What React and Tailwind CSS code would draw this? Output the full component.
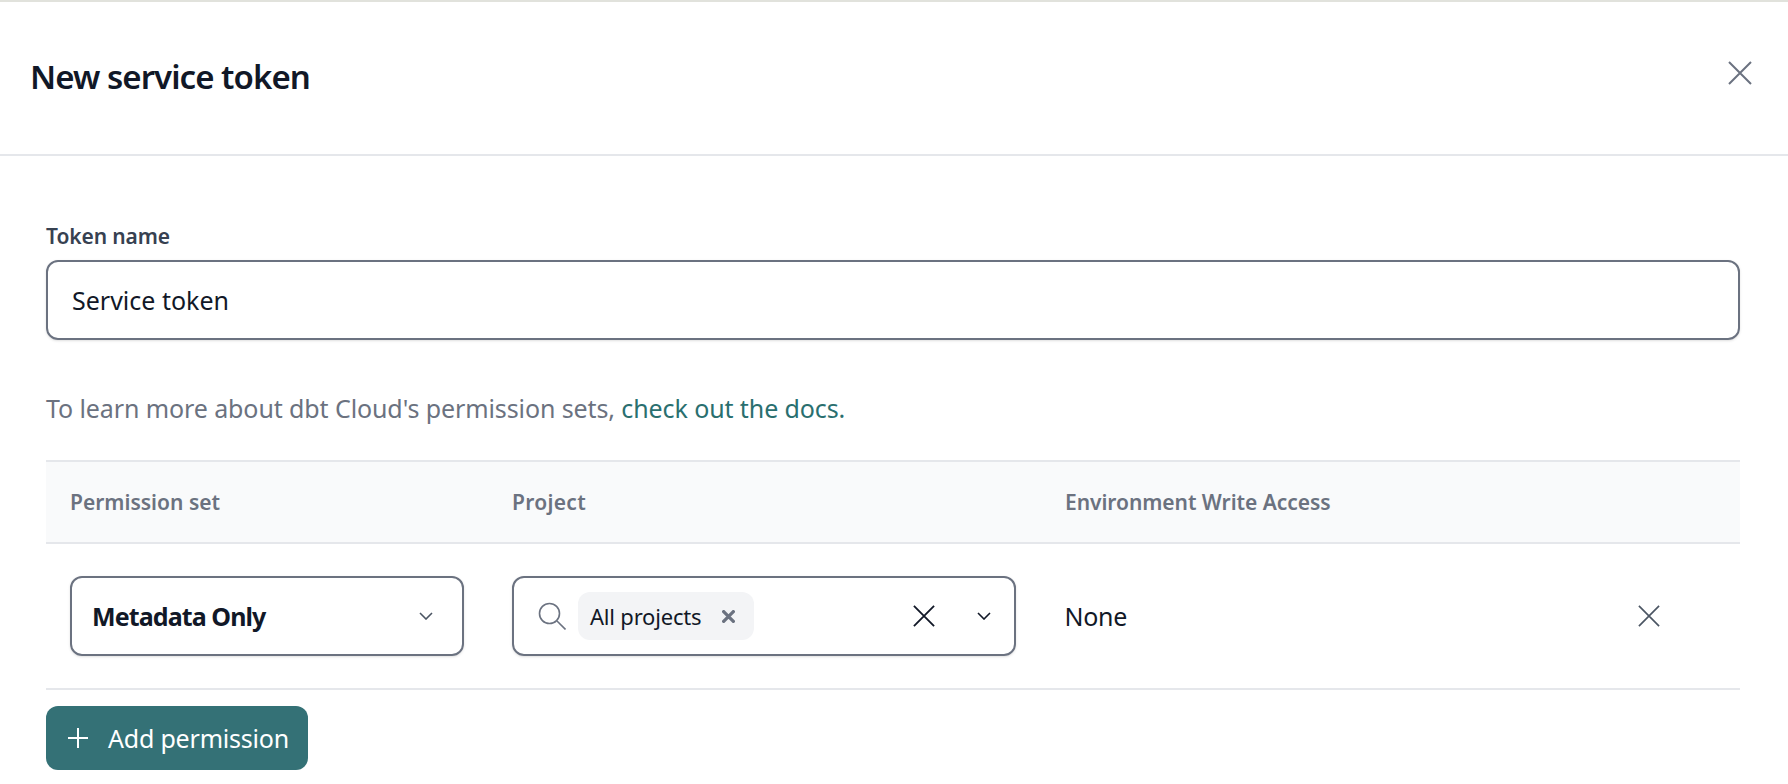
import React from "react";

const font = { fontFamily: '"Noto Sans", "Liberation Sans", sans-serif' };

function CrossIcon({ className, strokeWidth = 2 }) {
  return (
    <svg viewBox="0 0 24 24" fill="none" stroke="currentColor" strokeWidth={strokeWidth} className={className}>
      <path d="M1 1L23 23M23 1L1 23" />
    </svg>
  );
}

function ChevronIcon({ className }) {
  return (
    <svg viewBox="0 0 14 8" fill="none" stroke="currentColor" strokeWidth="1.6" className={className}>
      <path d="M1 1L7 7L13 1" />
    </svg>
  );
}

export default function App() {
  return (
    <div className="min-h-[784px] bg-white" style={font}>
      {/* Header */}
      <header className="h-[156px] flex items-center justify-between border-t-2 border-b-2 border-t-[#e1e2dc] border-b-[#e5e7eb] pl-[30px] pr-[36px]">
        <h1 className="text-[33px] leading-[40px] font-semibold text-[#111827] tracking-[-0.95px] -mt-[2px]">New service token</h1>
        <CrossIcon className="w-[24px] h-[24px] text-[#6b7280] -mt-[10px]" strokeWidth={2} />
      </header>

      <main className="pl-[46px] pr-[48px] pt-[64px]">
        <label className="block text-[21px] leading-[32px] font-semibold text-[#374151] tracking-[-0.1px] mb-[8px]">Token name</label>
        <div className="h-[80px] border-2 border-[#6b7280] rounded-[12px] shadow-sm flex items-center pl-[24px] pt-[2px] text-[25px] text-[#111827]">
          Service token
        </div>

        <p className="mt-[50px] text-[25px] leading-[36px] text-[#6b7280] tracking-[-0.1px]">
          To learn more about dbt Cloud's permission sets, <span className="text-[#2a6f6f]">check out the docs.</span>
        </p>

        {/* Permissions table */}
        <div className="mt-[34px] border-t-2 border-[#e5e7eb]">
          <div className="h-[82px] bg-[#f9fafb] border-b-2 border-[#e5e7eb] grid grid-cols-[466px_553px_1fr] items-center text-[21px] font-semibold text-[#6b7280]">
            <div className="pl-[24px] pt-[1px]">Permission set</div>
            <div className="pt-[1px] tracking-[0.3px]">Project</div>
            <div className="pt-[1px] tracking-[-0.05px]">Environment Write Access</div>
          </div>

          <div className="h-[146px] border-b-2 border-[#e5e7eb] grid grid-cols-[466px_553px_1fr] items-center">
            <div className="pl-[24px]">
              <div className="w-[394px] h-[80px] border-2 border-[#6b7280] rounded-[12px] shadow-sm flex items-center justify-between pl-[20px] pr-[29px]">
                <span className="text-[25px] font-bold text-[#111827] tracking-[-0.9px] pt-[2px]">Metadata Only</span>
                <ChevronIcon className="w-[14px] h-[8px] text-[#4b5563]" />
              </div>
            </div>

            <div>
              <div className="w-[504px] h-[80px] border-2 border-[#6b7280] rounded-[12px] shadow-sm flex items-center pl-[24px] pr-[23px]">
                <svg viewBox="0 0 28 28" fill="none" stroke="#6b7280" strokeWidth="1.6" className="w-[28px] h-[28px] shrink-0">
                  <circle cx="11.5" cy="11.5" r="10" />
                  <path d="M19 19L27.5 27.5" />
                </svg>
                <div className="ml-[12px] h-[48px] w-[176px] bg-[#f3f4f6] rounded-[12px] flex items-center pl-[12px] text-[22px] text-[#111827] tracking-[-0.2px]">
                  All projects
                  <CrossIcon className="w-[13px] h-[13px] text-[#6b7280] ml-auto mr-[19px]" strokeWidth={6} />
                </div>
                <CrossIcon className="w-[22px] h-[22px] text-[#111827] ml-auto" strokeWidth={2} />
                <ChevronIcon className="w-[14px] h-[8px] text-[#111827] ml-[42px]" />
              </div>
            </div>

            <div className="flex items-center justify-between pr-[80px]">
              <span className="text-[25px] text-[#111827] tracking-[-0.3px] pt-[2px] -ml-[0.5px]">None</span>
              <CrossIcon className="w-[22px] h-[22px] text-[#4b5563]" strokeWidth={1.8} />
            </div>
          </div>
        </div>

        <button className="mt-[16px] h-[64px] w-[262px] bg-[#347176] rounded-[12px] flex items-center pl-[22px] pt-[2px] text-white text-[25px] tracking-[-0.2px]">
          <svg viewBox="0 0 20 20" fill="none" stroke="currentColor" strokeWidth="2" className="w-[20px] h-[20px] mr-[20px] -mt-[2px]">
            <path d="M10 0V20M0 10H20" />
          </svg>
          Add permission
        </button>
      </main>
    </div>
  );
}
